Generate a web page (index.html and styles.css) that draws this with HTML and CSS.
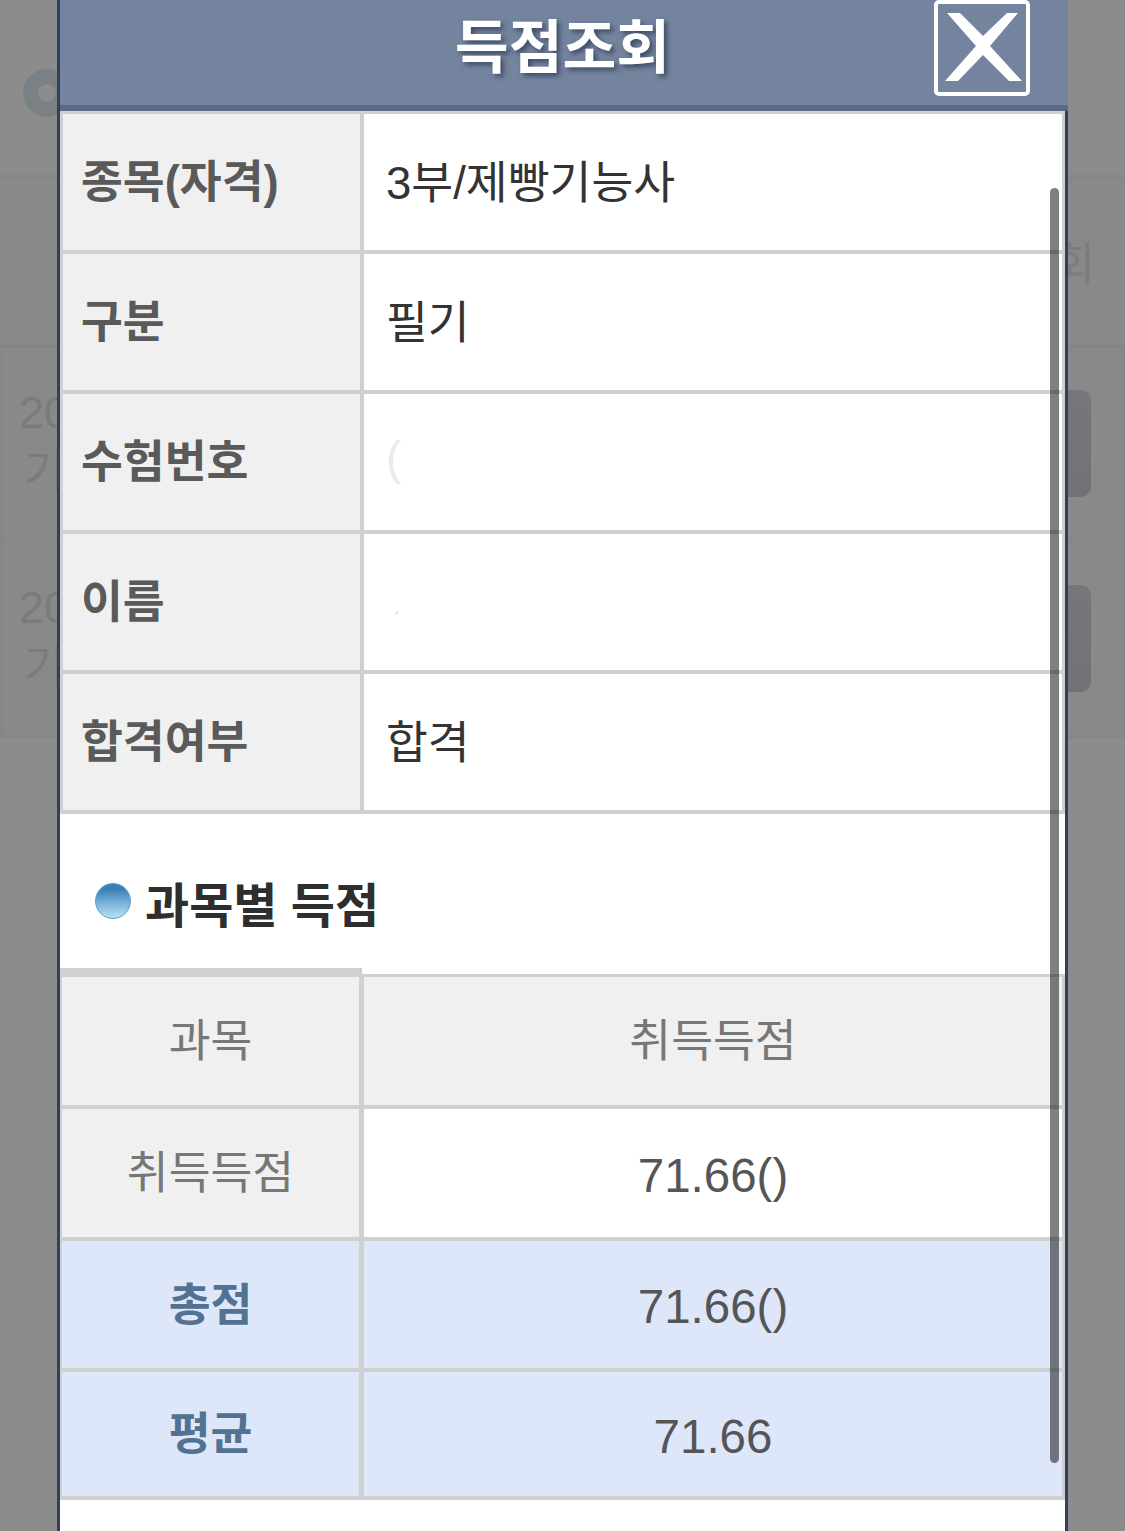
FILE: index.html
```html
<!DOCTYPE html>
<html lang="ko">
<head>
  <meta charset="UTF-8" />
  <meta name="viewport" content="width=device-width, initial-scale=1.0" />
  <title>득점조회</title>
  <link rel="stylesheet" href="styles.css">
</head>
<body>
  <!-- 뒤쪽 목록 화면 -->
  <div class="page">
    <div class="page-top">
      <svg class="disc" width="48" height="48" viewBox="0 0 48 48">
        <circle cx="24" cy="24" r="16.5" fill="none" stroke="#dcecf0" stroke-width="15" />
      </svg>
    </div>
    <div class="list-head">조회</div>
    <div class="list-row">
      <div class="list-text">
        <div>20</div>
        <div class="list-sub">기</div>
      </div>
      <div class="list-btn"></div>
    </div>
    <div class="list-row">
      <div class="list-text">
        <div>20</div>
        <div class="list-sub">기</div>
      </div>
      <div class="list-btn"></div>
    </div>
  </div>
  <div class="dim"></div>

  <!-- 득점조회 팝업 -->
  <div class="modal">
    <div class="modal-head">
      <h1 class="modal-title">득점조회</h1>
      <button class="close" aria-label="닫기">
        <svg width="88" height="88" viewBox="4 4 88 88">
          <polygon fill="#fff" points="13,13 26,13 49,36 73,13 84,13 56,46 88,81 75,81 49,55 24,81 11,81 42,46" />
        </svg>
      </button>
    </div>

    <table class="info">
      <tr><th>종목(자격)</th><td>3부/제빵기능사</td></tr>
      <tr><th>구분</th><td>필기</td></tr>
      <tr><th>수험번호</th><td><span class="hidden-text">(</span></td></tr>
      <tr><th>이름</th><td><span class="hidden-dot">.</span></td></tr>
      <tr><th>합격여부</th><td>합격</td></tr>
    </table>

    <div class="section-title"><span class="bullet"></span>과목별 득점</div>
    <div class="tab-line"></div>

    <table class="score">
      <tr class="score-head"><th>과목</th><th>취득득점</th></tr>
      <tr><th>취득득점</th><td>71.66()</td></tr>
      <tr class="total"><th>총점</th><td>71.66()</td></tr>
      <tr class="total"><th>평균</th><td>71.66</td></tr>
    </table>

    <div class="scrollbar"></div>
  </div>
</body>
</html>
```

FILE: styles.css
```css
* {
  box-sizing: border-box;
}

html, body {
  margin: 0;
  height: 1531px;
  overflow: hidden;
}

body {
  position: relative;
  font-family: "Liberation Sans", "Noto Sans CJK KR", sans-serif;
  background: #fff;
}

/* back page */
.page-top {
  height: 178px;
  padding: 69px 0 0 23px;
  border-bottom: 3px solid #f4f4f4;
}

.disc {
  display: block;
}

.list-head {
  height: 170px;
  padding: 50px 30px 0 0;
  text-align: right;
  font-size: 45px;
  color: #e2e2e2;
  background: #fafafa;
  border-bottom: 3px solid #f0f0f0;
}

.list-row {
  display: flex;
  justify-content: space-between;
  align-items: center;
  height: 195px;
  padding: 0 31px 2px 16px;
  background: #fafafa;
  border: 3px solid #f4f4f4;
  border-top: 0;
}

.list-text {
  font-size: 45px;
  line-height: 58px;
  color: #e0e0e0;
}

.list-sub {
  margin-top: 2px;
  padding-left: 5px;
}

.list-btn {
  width: 120px;
  height: 107px;
  border-radius: 10px;
  background: linear-gradient(#d6d6e0, #cfcfd8);
}

.dim {
  position: absolute;
  inset: 0;
  background: rgba(0, 0, 0, 0.45);
}

/* popup */
.modal {
  position: absolute;
  top: 0;
  bottom: 0;
  left: 57px;
  width: 1011px;
  background: #fff;
  border-left: 3px solid #2f4060;
  border-right: 3px solid #2f4060;
}

.modal-head {
  display: flex;
  justify-content: center;
  align-items: center;
  position: relative;
  height: 111px;
  margin: 0 -3px 0 0;
  padding: 0 3px 20px 0;
  background: #74849e;
  border-bottom: 6px solid #5a6a85;
}

.modal-title {
  margin: 0;
  font-size: 58.5px;
  font-weight: bold;
  color: #fff;
  text-shadow: 3px 3px 5px rgba(40, 50, 75, 0.7);
}

.close {
  position: absolute;
  top: 0;
  left: 874px;
  width: 96px;
  height: 96px;
  padding: 0;
  border: 4px solid #fff;
  border-radius: 5px;
  background: none;
}

.close svg {
  display: block;
}

table {
  width: 1005px;
  table-layout: fixed;
  border-spacing: 0;
  font-size: 45.5px;
}

.info {
  border-top: 3px solid #d0d0d0;
}

.info tr {
  height: 140px;
}

th, td {
  padding: 0;
  border-bottom: 4px solid #d0d0d0;
}

.info th {
  width: 304px;
  padding: 0 0 8px 18px;
  text-align: left;
  font-weight: bold;
  color: #5a5a5a;
  background: #f0f0f0;
  border-left: 3px solid #d0d0d0;
  border-right: 4px solid #d0d0d0;
}

.info td {
  padding: 0 0 7px 22px;
  color: #333;
  border-right: 3px solid #d0d0d0;
}

.hidden-text {
  color: #ebebeb;
}

.hidden-dot {
  padding-left: 8px;
  color: #ddd;
  font-size: 20px;
}

.section-title {
  display: flex;
  align-items: center;
  height: 154px;
  padding: 22px 0 0 35px;
  font-size: 48px;
  font-weight: bold;
  color: #2e2e2e;
}

.bullet {
  width: 36px;
  height: 36px;
  margin: -2px 14px 0 0;
  border-radius: 50%;
  border: 1px solid #5aa0c8;
  background: linear-gradient(#3a80b8 15%, #7fb6dc 60%, #bcdff2);
}

.tab-line {
  width: 302px;
  height: 6px;
  background: #d0d0d0;
}

.score {
  border-top: 3px solid #d0d0d0;
  text-align: center;
}

.score tr {
  height: 132px;
}

.score tr:nth-child(3) {
  height: 131px;
}

.score tr:last-child {
  height: 128px;
}

.score th {
  width: 304px;
  padding-bottom: 8px;
  font-weight: normal;
  color: #777;
  background: #f0f0f0;
  border-left: 2px solid #d0d0d0;
  border-right: 5px solid #d0d0d0;
}

.score td {
  padding-top: 4px;
  font-size: 47.5px;
  color: #555;
  border-right: 3px solid #d0d0d0;
}

.score-head th:last-child {
  border-left: 0;
  border-right: 3px solid #d0d0d0;
  width: auto;
}

.total th {
  font-weight: bold;
  color: #527291;
  background: #dee6f9;
}

.total td {
  background: #dee6f9;
}

.scrollbar {
  position: absolute;
  top: 188px;
  left: 990px;
  width: 9px;
  height: 1275px;
  border-radius: 5px;
  background: rgba(0, 0, 0, 0.5);
}
```
